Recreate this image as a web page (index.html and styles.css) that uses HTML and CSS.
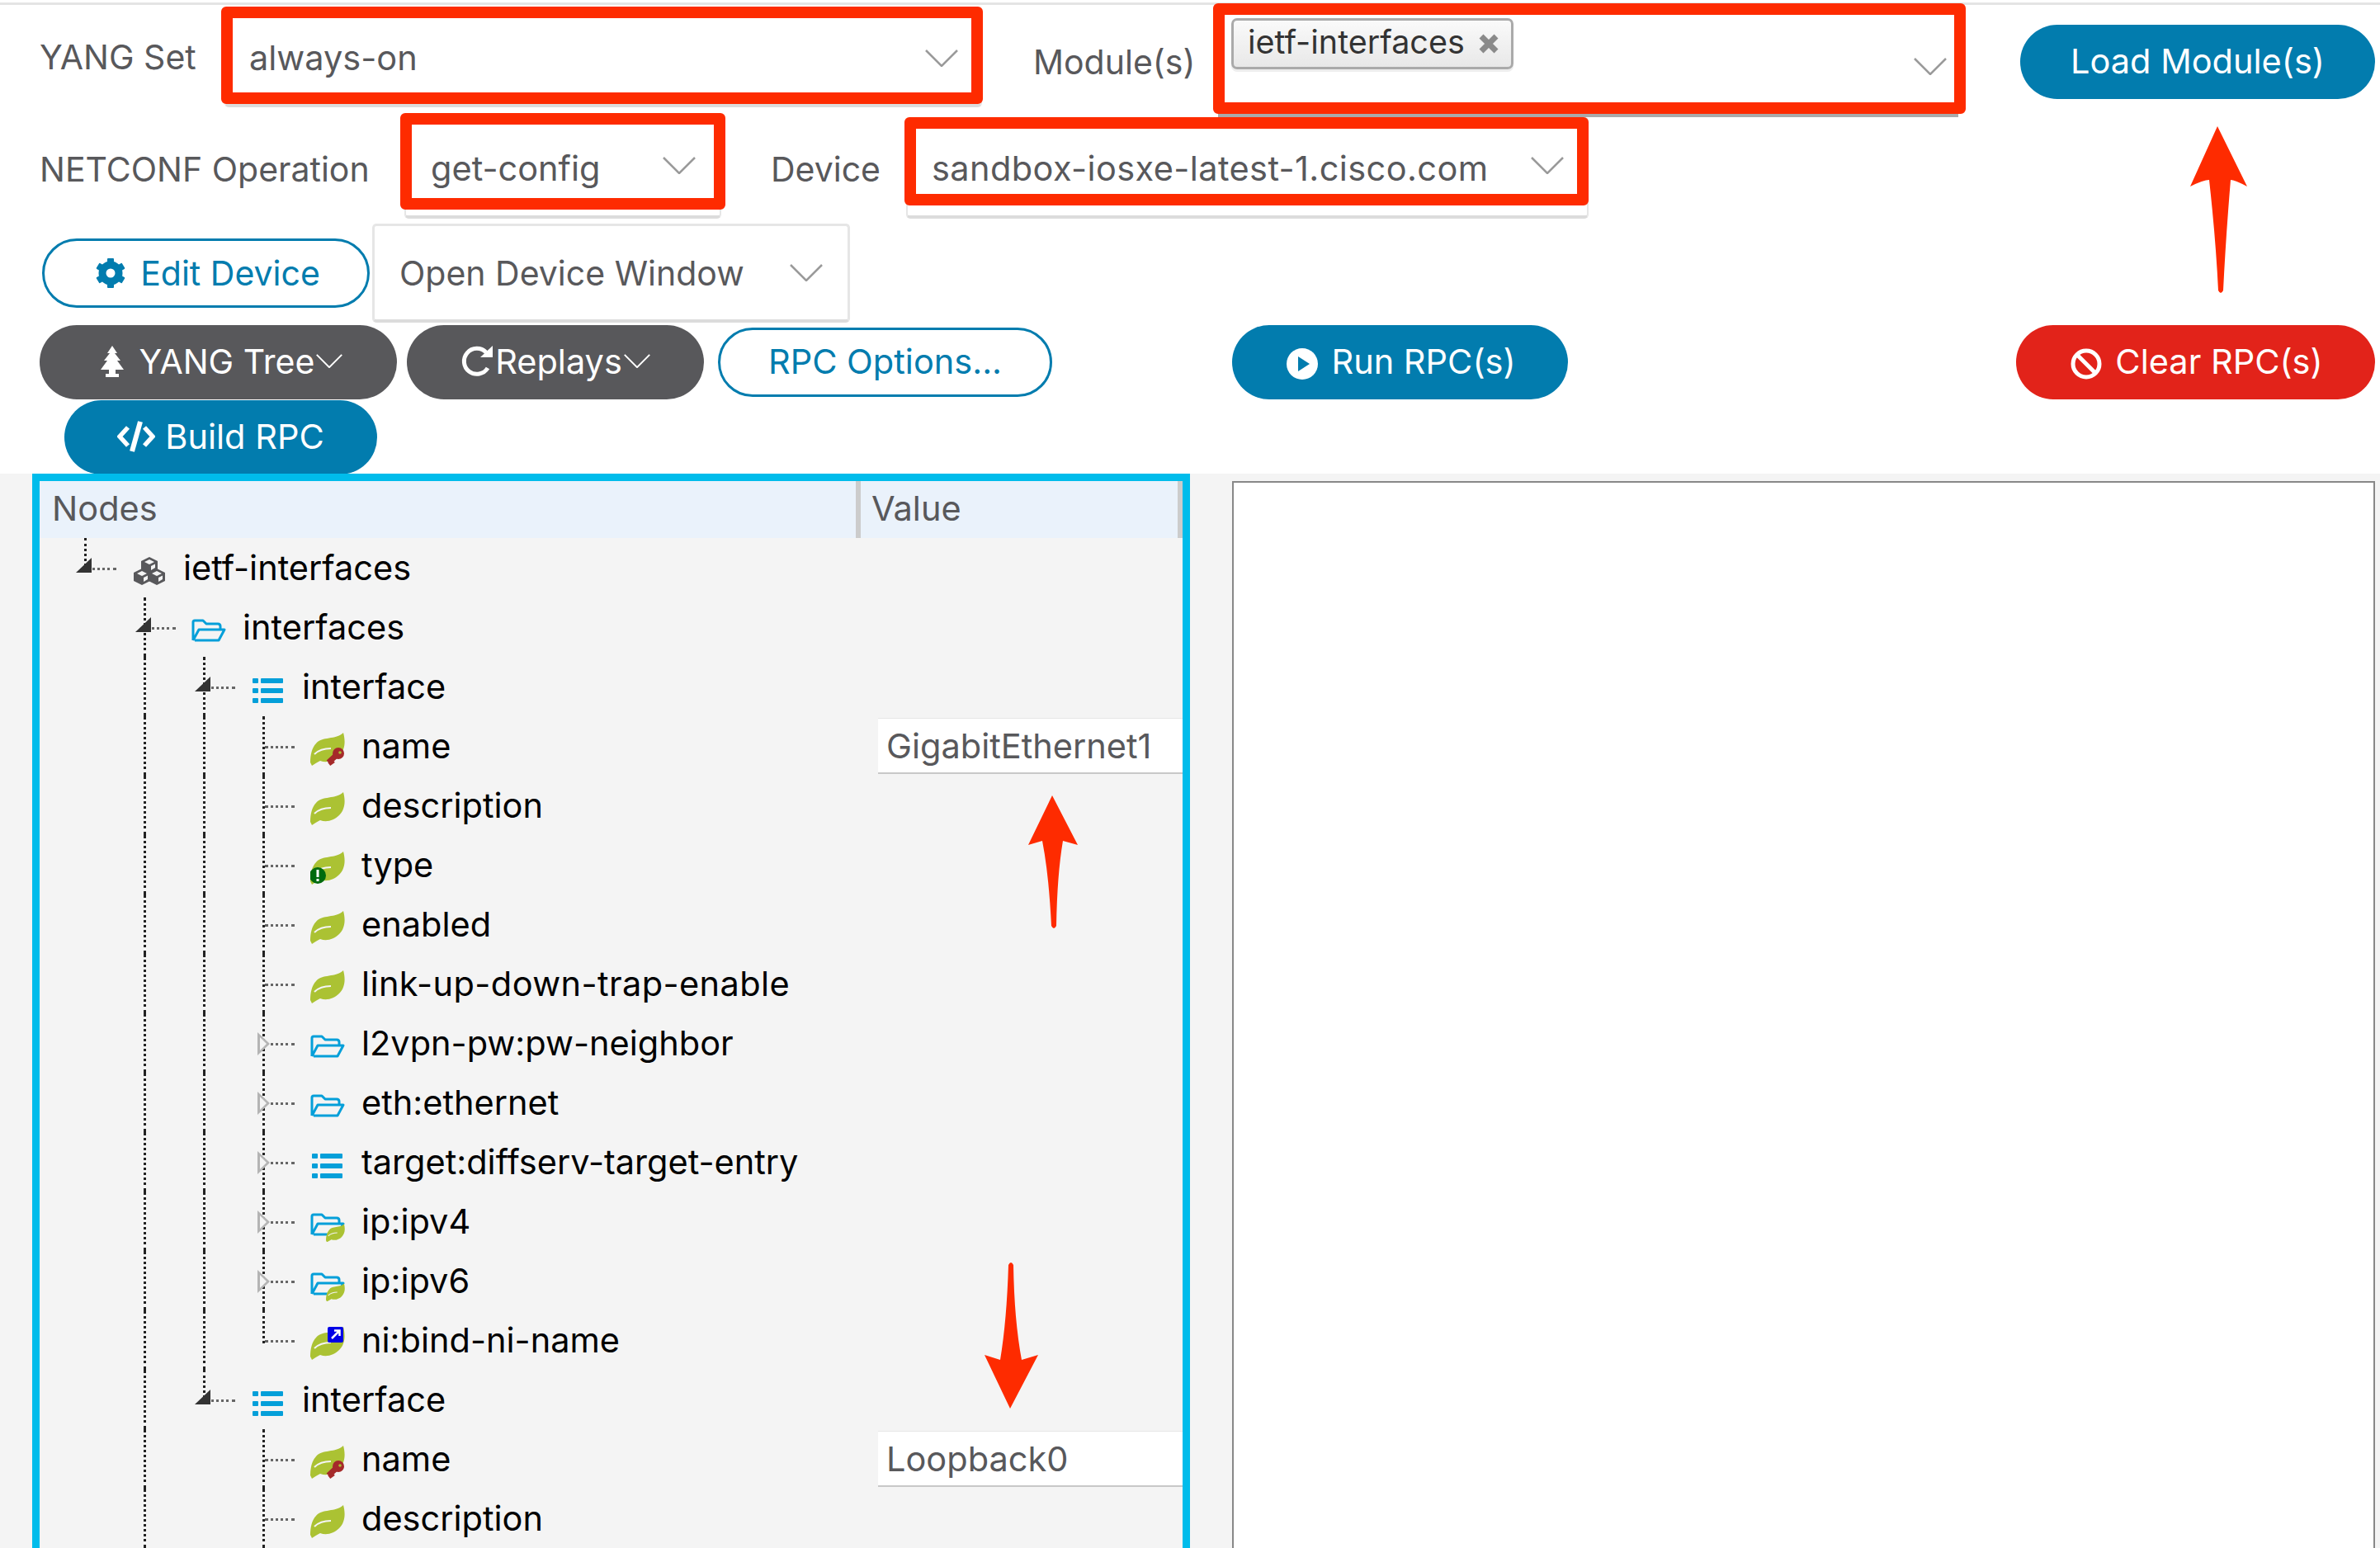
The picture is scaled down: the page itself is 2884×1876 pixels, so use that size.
FILE: index.html
```html
<!DOCTYPE html>
<html lang="en">
<head>
    <meta charset="UTF-8">
    <meta name="viewport" content="width=device-width, initial-scale=1.0">
    <title>YANG Suite - NETCONF</title>
    <link rel="stylesheet" href="styles.css">
</head>
<body>
    <svg class="defs" width="0" height="0">
        <symbol id="chev" viewBox="0 0 40 21"><path d="M1 1 L20 20 L39 1" fill="none" stroke="currentColor" stroke-width="2.5"/></symbol>
        <symbol id="leaf-shape" viewBox="0 0 42 42">
            <path d="M40 1 C43 12 42 22 35 29 C29 35 20 38 12 35 C8 37 5 39 2 41 L0 37 C0 28 2 19 7 14 C14 5 31 10 40 1 Z" fill="#abc233"/>
            <path d="M5 27 C10 22 17 20 25 20" fill="none" stroke="#f4f4f4" stroke-width="2"/>
        </symbol>
        <symbol id="leaf" viewBox="0 0 42 42"><use href="#leaf-shape"/></symbol>
        <symbol id="leaf-key" viewBox="0 0 42 42">
            <use href="#leaf-shape"/>
            <path d="M34 26 L22 37 M24 35 L27 39" fill="none" stroke="#a52a2a" stroke-width="7"/>
            <circle cx="34" cy="26" r="7" fill="#a52a2a"/>
            <circle cx="36" cy="25" r="1.8" fill="#abc233"/>
        </symbol>
        <symbol id="leaf-must" viewBox="0 0 42 42">
            <use href="#leaf-shape"/>
            <circle cx="9" cy="30" r="10" fill="#006b0e"/>
            <rect x="7.5" y="23" width="3" height="9" fill="#fff"/>
            <rect x="7.5" y="34" width="3" height="3" fill="#fff"/>
        </symbol>
        <symbol id="leaf-link" viewBox="0 0 42 42">
            <use href="#leaf-shape"/>
            <rect x="21" y="1" width="19" height="19" rx="2" fill="#0000e6"/>
            <path d="M26 15 L35 6 M29 5.5 H35.5 V12" fill="none" stroke="#fff" stroke-width="2.5"/>
        </symbol>
        <symbol id="folder" viewBox="0 0 42 42">
            <path d="M2 33 V11 Q2 9 4 9 H14 L18 13 H32 Q35 13 35 16 V19 M2 33 L9 20 H40 L33 33 H4" fill="none" stroke="#049fd9" stroke-width="3" stroke-linejoin="round"/>
        </symbol>
        <symbol id="folder-leaf" viewBox="0 0 42 42">
            <use href="#folder"/>
            <use href="#leaf-shape" x="19" y="20" width="23" height="23"/>
        </symbol>
        <symbol id="list" viewBox="0 0 42 42">
            <g fill="#049fd9">
                <rect x="2" y="7" width="7" height="6" rx="1"/><rect x="12" y="7" width="27" height="6" rx="1"/>
                <rect x="2" y="19" width="7" height="6" rx="1"/><rect x="12" y="19" width="27" height="6" rx="1"/>
                <rect x="2" y="31" width="7" height="6" rx="1"/><rect x="12" y="31" width="27" height="6" rx="1"/>
            </g>
        </symbol>
        <symbol id="cube" viewBox="0 0 20 20">
            <path d="M10 0 L20 5 V15 L10 20 L0 15 V5 Z" fill="#58585b"/>
            <path d="M10 3 L16 6 L10 9 L4 6 Z M12 11 L17 8.5 V13 L12 16 Z" fill="#f4f4f4"/>
        </symbol>
        <symbol id="pack" viewBox="0 0 42 42">
            <use href="#cube" x="11" y="4" width="20" height="20"/>
            <use href="#cube" x="2" y="18" width="20" height="20"/>
            <use href="#cube" x="20" y="18" width="20" height="20"/>
        </symbol>
    </svg>

    <div class="row row-a">
        <span class="lbl lbl-yang">YANG Set</span>
        <div class="sel sel-yang">
            <span>always-on</span>
            <svg class="chev"><use href="#chev"/></svg>
            <i class="mark mark-yang"></i>
        </div>
        <span class="lbl lbl-mod">Module(s)</span>
        <div class="sel sel-mod">
            <span class="chip">ietf-interfaces
                <svg class="chip-x" viewBox="0 0 28 28"><path d="M5 5 L23 23 M23 5 L5 23" stroke="#8a8a8a" stroke-width="7"/></svg>
            </span>
            <svg class="chev"><use href="#chev"/></svg>
            <i class="mark mark-mod"></i>
        </div>
        <button class="btn blue btn-load">Load Module(s)</button>
    </div>

    <div class="row row-b">
        <span class="lbl lbl-op">NETCONF Operation</span>
        <div class="sel sel-op">
            <span>get-config</span>
            <svg class="chev"><use href="#chev"/></svg>
            <i class="mark mark-op"></i>
        </div>
        <span class="lbl lbl-dev">Device</span>
        <div class="sel sel-dev">
            <span class="wide">sandbox-iosxe-latest-1.cisco.com</span>
            <svg class="chev"><use href="#chev"/></svg>
            <i class="mark mark-dev"></i>
        </div>
    </div>

    <div class="row row-c">
        <button class="btn ghost btn-edit">
            <svg class="icon-gear" viewBox="0 0 36 36">
                <circle cx="18" cy="18" r="10" fill="none" stroke="#027cae" stroke-width="9"/>
                <g fill="#027cae">
                    <rect x="14" y="0" width="8" height="36" rx="1"/>
                    <rect x="14" y="0" width="8" height="36" rx="1" transform="rotate(60 18 18)"/>
                    <rect x="14" y="0" width="8" height="36" rx="1" transform="rotate(120 18 18)"/>
                </g>
                <circle cx="18" cy="18" r="5.5" fill="#fff"/>
            </svg>
            Edit Device
        </button>
        <div class="sel sel-win">
            <span>Open Device Window</span>
            <svg class="chev"><use href="#chev"/></svg>
        </div>
    </div>

    <div class="row row-d">
        <button class="btn dark btn-tree">
            <svg class="icon-tree" viewBox="0 0 28 38"><path d="M14 0 L20 9 H17 L24 18 H20 L28 29 H18 V34 H22 V38 H6 V34 H10 V29 H0 L8 18 H4 L11 9 H8 Z" fill="#fff"/></svg>
            <span>YANG Tree</span>
            <svg class="chev-sm"><use href="#chev"/></svg>
        </button>
        <button class="btn dark btn-replay">
            <svg class="icon-replay" viewBox="0 0 40 40">
                <path d="M33 28 A15.5 15.5 0 1 1 31 9" fill="none" stroke="#fff" stroke-width="5"/>
                <path d="M24 15 H39 V1 Z" fill="#fff"/>
            </svg>
            <span>Replays</span>
            <svg class="chev-sm"><use href="#chev"/></svg>
        </button>
        <button class="btn ghost btn-opts">RPC Options...</button>
        <button class="btn blue btn-run">
            <svg class="icon-round" viewBox="0 0 38 38">
                <circle cx="19" cy="19" r="19" fill="#fff"/>
                <path d="M14 10 L28 19 L14 28 Z" fill="#027cae"/>
            </svg>
            Run RPC(s)
        </button>
        <button class="btn red btn-clear">
            <svg class="icon-round" viewBox="0 0 38 38">
                <circle cx="19" cy="19" r="16" fill="none" stroke="#fff" stroke-width="5"/>
                <path d="M8 8 L30 30" stroke="#fff" stroke-width="5"/>
            </svg>
            Clear RPC(s)
        </button>
    </div>

    <div class="row row-e">
        <button class="btn blue btn-build">
            <svg class="icon-code" viewBox="0 0 46 38">
                <path d="M13 8 L3 19 L13 30 M33 8 L43 19 L33 30" fill="none" stroke="#fff" stroke-width="5.5"/>
                <path d="M28 1 L18 37" stroke="#fff" stroke-width="6"/>
            </svg>
            Build RPC
        </button>
    </div>

    <main class="main">
        <section class="tree-panel">
            <div class="tree-head">
                <div class="th th-nodes">Nodes</div>
                <div class="th th-value">Value</div>
            </div>
            <div class="tree">
                <div class="node">
                    <span class="cell half"><i class="tri open"></i></span>
                    <svg class="ico"><use href="#pack"/></svg><span class="name">ietf-interfaces</span>
                </div>
                <div class="node">
                    <span class="cell"></span><span class="cell full"><i class="tri open"></i></span>
                    <svg class="ico"><use href="#folder"/></svg><span class="name">interfaces</span>
                </div>
                <div class="node">
                    <span class="cell"></span><span class="cell line"></span><span class="cell full"><i class="tri open"></i></span>
                    <svg class="ico"><use href="#list"/></svg><span class="name">interface</span>
                </div>
                <div class="node">
                    <span class="cell"></span><span class="cell line"></span><span class="cell line"></span><span class="cell full"></span>
                    <svg class="ico"><use href="#leaf-key"/></svg><span class="name">name</span>
                    <input class="val" value="GigabitEthernet1">
                </div>
                <div class="node">
                    <span class="cell"></span><span class="cell line"></span><span class="cell line"></span><span class="cell full"></span>
                    <svg class="ico"><use href="#leaf"/></svg><span class="name">description</span>
                </div>
                <div class="node">
                    <span class="cell"></span><span class="cell line"></span><span class="cell line"></span><span class="cell full"></span>
                    <svg class="ico"><use href="#leaf-must"/></svg><span class="name">type</span>
                </div>
                <div class="node">
                    <span class="cell"></span><span class="cell line"></span><span class="cell line"></span><span class="cell full"></span>
                    <svg class="ico"><use href="#leaf"/></svg><span class="name">enabled</span>
                </div>
                <div class="node">
                    <span class="cell"></span><span class="cell line"></span><span class="cell line"></span><span class="cell full"></span>
                    <svg class="ico"><use href="#leaf"/></svg><span class="name wide">link-up-down-trap-enable</span>
                </div>
                <div class="node">
                    <span class="cell"></span><span class="cell line"></span><span class="cell line"></span><span class="cell full"><i class="tri closed"></i></span>
                    <svg class="ico"><use href="#folder"/></svg><span class="name">l2vpn-pw:pw-neighbor</span>
                </div>
                <div class="node">
                    <span class="cell"></span><span class="cell line"></span><span class="cell line"></span><span class="cell full"><i class="tri closed"></i></span>
                    <svg class="ico"><use href="#folder"/></svg><span class="name">eth:ethernet</span>
                </div>
                <div class="node">
                    <span class="cell"></span><span class="cell line"></span><span class="cell line"></span><span class="cell full"><i class="tri closed"></i></span>
                    <svg class="ico"><use href="#list"/></svg><span class="name">target:diffserv-target-entry</span>
                </div>
                <div class="node">
                    <span class="cell"></span><span class="cell line"></span><span class="cell line"></span><span class="cell full"><i class="tri closed"></i></span>
                    <svg class="ico"><use href="#folder-leaf"/></svg><span class="name">ip:ipv4</span>
                </div>
                <div class="node">
                    <span class="cell"></span><span class="cell line"></span><span class="cell line"></span><span class="cell full"><i class="tri closed"></i></span>
                    <svg class="ico"><use href="#folder-leaf"/></svg><span class="name">ip:ipv6</span>
                </div>
                <div class="node">
                    <span class="cell"></span><span class="cell line"></span><span class="cell line"></span><span class="cell half"></span>
                    <svg class="ico"><use href="#leaf-link"/></svg><span class="name">ni:bind-ni-name</span>
                </div>
                <div class="node">
                    <span class="cell"></span><span class="cell line"></span><span class="cell half"><i class="tri open"></i></span>
                    <svg class="ico"><use href="#list"/></svg><span class="name">interface</span>
                </div>
                <div class="node">
                    <span class="cell"></span><span class="cell line"></span><span class="cell"></span><span class="cell full"></span>
                    <svg class="ico"><use href="#leaf-key"/></svg><span class="name">name</span>
                    <input class="val" value="Loopback0">
                </div>
                <div class="node">
                    <span class="cell"></span><span class="cell line"></span><span class="cell"></span><span class="cell full"></span>
                    <svg class="ico"><use href="#leaf"/></svg><span class="name">description</span>
                </div>
            </div>
        </section>
        <section class="rpc-panel"></section>
    </main>

    <!-- annotation arrows drawn over the screenshot -->
    <svg class="arrows" viewBox="0 0 2884 1876">
        <g fill="#fe2b00">
            <path d="M2687 153 L2723 226 Q2708 218 2703 218 Q2697 290 2694 352 Q2691 358 2688 352 Q2685 290 2677 218 Q2670 218 2654 226 Z"/>
            <path d="M1275 964 L1306 1024 L1288 1019 Q1281 1060 1280 1122 Q1277 1128 1274 1122 Q1271 1060 1263 1019 L1246 1024 Z"/>
            <path d="M1224 1707 L1193 1642 L1212 1648 Q1220 1600 1222 1533 Q1225 1527 1228 1533 Q1229 1600 1238 1648 L1258 1642 Z"/>
        </g>
    </svg>
</body>
</html>
```

FILE: styles.css
```css
html, body {
    margin: 0;
    padding: 0;
}
body {
    position: relative;
    width: 2884px;
    height: 1876px;
    overflow: hidden;
    background-color: #FFFFFF;
    color: #58585b;
    font-family: Inter, "Open Sans", sans-serif;
    font-size: 41.5px;
    line-height: 50px;
}
.defs {
    position: absolute;
}
.wide {
    letter-spacing: 0.4px;
}
.row {
    display: flex;
    align-items: flex-start;
}
.row-a {
    height: 132px;
    padding-left: 48px;
    border-top: 3px solid #e4e4e4;
    margin-top: 3px;
    box-sizing: border-box;
}
.row-b {
    height: 136px;
    padding-left: 48px;
}
.row-c {
    height: 124px;
    padding-left: 51px;
}
.row-d {
    height: 90px;
    padding-left: 48px;
}
.row-e {
    height: 89px;
    padding-left: 78px;
}
.lbl {
    flex: none;
    white-space: nowrap;
    font-size: 41px;
}
.lbl-yang {
    width: 224px;
    margin-top: 38px;
}
.lbl-mod {
    width: 224px;
    margin-left: 62px;
    margin-top: 44px;
}
.lbl-op {
    width: 442px;
    margin-top: 45px;
}
.lbl-dev {
    width: 164px;
    margin-left: 60px;
    margin-top: 45px;
}

/* selects */
.sel {
    position: relative;
    flex: none;
    display: flex;
    align-items: center;
    justify-content: space-between;
    box-sizing: border-box;
    background: #fff;
    border: 2px solid #e6e6e6;
    border-bottom: 4px solid #dcdcdc;
    border-radius: 5px;
    white-space: nowrap;
}
.chev {
    flex: none;
    width: 40px;
    height: 21px;
    color: #9a9a9a;
}
.sel-yang {
    width: 918px;
    height: 118px;
    margin-top: 6px;
    padding: 0 27px 0 28px;
}
.sel-mod {
    width: 897px;
    height: 132px;
    margin-top: 4px;
    padding: 0 14px 0 16px;
    align-items: flex-start;
    border: 0;
    border-bottom: 4px solid #aaa;
    border-radius: 0;
}
.sel-mod .chev {
    margin-top: 60px;
}
.sel-op {
    width: 384px;
    height: 123px;
    margin-top: 7px;
    padding: 2px 29px 0 30px;
}
.sel-op .chev {
    margin-top: -6px;
}
.sel-dev {
    width: 827px;
    height: 123px;
    margin-top: 7px;
    padding: 2px 28px 0 29px;
}
.sel-dev .chev {
    margin-top: -6px;
}
.sel-win {
    width: 579px;
    height: 120px;
    margin-left: 3px;
    padding: 2px 30px 2px 30px;
    border-width: 3px;
    border-bottom-width: 4px;
    font-size: 41px;
}
.chip {
    display: flex;
    align-items: center;
    box-sizing: border-box;
    width: 342px;
    height: 62px;
    margin-top: 12px;
    padding: 0 13px 4px 17px;
    justify-content: space-between;
    color: #333;
    font-size: 39.5px;
    background: linear-gradient(#fafafa, #e8e8e8);
    border: 3px solid #aaa;
    border-radius: 7px;
    box-shadow: 0 3px 0 #eee;
}
.chip-x {
    flex: none;
    width: 28px;
    height: 28px;
    margin-top: 4px;
}

/* red annotation boxes */
.mark {
    position: absolute;
    border: 14px solid #fe2b00;
    border-radius: 6px;
}
.mark-yang {
    inset: -6px -3px 0 -6px;
}
.mark-mod {
    inset: -6px -9px 0 -6px;
}
.mark-op {
    inset: -7px -7px 7px -7px;
}
.mark-dev {
    inset: -2px -2px 12px -4px;
}

/* buttons */
.btn {
    flex: none;
    display: flex;
    align-items: center;
    justify-content: center;
    box-sizing: border-box;
    height: 90px;
    padding: 0 0 3px;
    border: 0;
    border-radius: 45px;
    font: inherit;
    white-space: nowrap;
    color: #fff;
}
.blue {
    background-color: #027cae;
}
.dark {
    background-color: #58585b;
}
.red {
    background-color: #e2231a;
}
.ghost {
    height: 84px;
    background-color: #fff;
    color: #027cae;
    border: 3px solid #027cae;
}
.btn-load {
    width: 430px;
    margin-left: 75px;
    margin-top: 24px;
}
.btn-edit {
    width: 397px;
    margin-top: 18px;
    padding-left: 5px;
    padding-bottom: 0;
    font-size: 41px;
}
.btn-tree {
    width: 433px;
    padding-left: 8px;
    font-size: 41px;
    margin-top: -1px;
}
.btn-replay {
    width: 360px;
    margin-left: 12px;
    margin-top: -1px;
}
.btn-opts {
    width: 405px;
    margin-left: 17px;
    margin-top: 2px;
}
.btn-run {
    width: 407px;
    margin-left: 218px;
    margin-top: -1px;
    padding-left: 3px;
}
.btn-clear {
    width: 435px;
    margin-left: 543px;
    margin-top: -1px;
    padding-left: 3px;
}
.btn-build {
    width: 379px;
}
.icon-gear {
    flex: none;
    width: 36px;
    height: 36px;
    margin-right: 18px;
}
.icon-tree {
    flex: none;
    width: 28px;
    height: 38px;
    margin-right: 19px;
}
.icon-replay {
    flex: none;
    width: 40px;
    height: 40px;
    margin-right: 2px;
}
.icon-round {
    flex: none;
    width: 38px;
    height: 38px;
    margin-top: 6px;
    margin-right: 16px;
}
.icon-code {
    flex: none;
    width: 46px;
    height: 38px;
    margin-right: 12px;
}
.chev-sm {
    flex: none;
    width: 32px;
    height: 17px;
    margin-left: 2px;
    color: #fff;
}

/* bottom panels */
.main {
    display: grid;
    grid-template-columns: 1403px 1385px;
    gap: 51px;
    height: 1302px;
    padding-left: 39px;
    background-color: #f4f4f4;
}
.tree-panel {
    box-sizing: border-box;
    border: 9px solid #00bceb;
    border-bottom: 0;
}
.tree-head {
    display: flex;
    height: 69px;
    background-color: #eaf2fb;
}
.th {
    box-sizing: border-box;
    line-height: 66px;
    border-right: 6px solid #ccc;
}
.th-nodes {
    width: 995px;
    padding-left: 15px;
}
.th-value {
    flex: 1;
    padding-left: 13px;
}
.tree {
    padding-left: 24px;
}
.node {
    display: flex;
    align-items: center;
    height: 72px;
    color: #000;
}
.cell {
    position: relative;
    flex: none;
    width: 72px;
    height: 72px;
}
.line::before,
.full::before,
.half::before {
    content: "";
    position: absolute;
    left: 30px;
    top: 0;
    height: 100%;
    border-left: 3px dotted #222;
}
.half::before {
    height: 40px;
}
.full::after,
.half::after {
    content: "";
    position: absolute;
    left: 33px;
    top: 36px;
    width: 36px;
    border-top: 3px dotted #666;
}
.tri {
    position: absolute;
    z-index: 1;
}
.tri.open {
    left: 20px;
    top: 24px;
    width: 19px;
    height: 18px;
    background-color: #333;
    clip-path: polygon(100% 0, 100% 100%, 0 100%);
}
.tri.closed {
    left: 24px;
    top: 23px;
    width: 15px;
    height: 28px;
    background-color: #b4b4b4;
    clip-path: polygon(0 0, 100% 50%, 0 100%);
}
.tri.closed::after {
    content: "";
    position: absolute;
    left: 3px;
    top: 6px;
    width: 8px;
    height: 16px;
    background-color: #f4f4f4;
    clip-path: polygon(0 0, 100% 50%, 0 100%);
}
.ico {
    flex: none;
    width: 42px;
    height: 42px;
    margin-top: 8px;
    margin-left: 16px;
}
.name {
    margin-left: 20px;
    white-space: nowrap;
}
.val {
    box-sizing: border-box;
    width: 369px;
    height: 68px;
    margin-left: auto;
    padding: 0 0 0 10px;
    background: #fff;
    border: 0;
    border-top: 1px solid #e6e6e6;
    border-bottom: 2px solid #c8c8c8;
    color: #58585b;
    font: inherit;
}
.rpc-panel {
    box-sizing: border-box;
    margin-top: 9px;
    background-color: #fff;
    border: 2px solid #888;
    border-bottom: 0;
}
.arrows {
    position: absolute;
    left: 0;
    top: 0;
    width: 2884px;
    height: 1876px;
}
```
